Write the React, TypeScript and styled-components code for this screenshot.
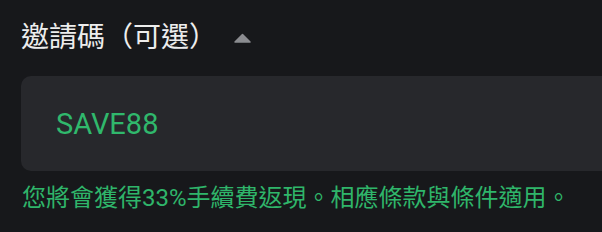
import React from "react";
import styled, { createGlobalStyle } from "styled-components";

const Global = createGlobalStyle`
  html, body { margin: 0; padding: 0; background: #17181b; }
  body { width: 602px; height: 232px; overflow: hidden; font-family: Roboto, "Noto Sans CJK TC", sans-serif; }
`;

const Page = styled.div`
  width: 602px;
  height: 232px;
  box-sizing: border-box;
  padding: 18px 0 0 21px;
  display: flex;
  flex-direction: column;
  overflow: hidden;
`;

const Header = styled.div`
  display: flex;
  align-items: center;
  gap: 17px;
  height: 40px;
`;

const Title = styled.span`
  color: #ededed;
  font-size: 28px;
  font-weight: 400;
  line-height: 40px;
`;

const Caret = styled.svg`
  width: 17px;
  height: 10px;
`;

const InputBox = styled.div`
  margin-top: 18px;
  width: 640px;
  height: 95px;
  box-sizing: border-box;
  background: #27282c;
  border-radius: 10px;
  display: flex;
  align-items: center;
  padding-left: 35px;
`;

const Code = styled.span`
  color: #30b86c;
  font-size: 29px;
  line-height: 40px;
`;

const Note = styled.p`
  margin: 11px 0 0 1px;
  color: #2fb56a;
  font-size: 24px;
  line-height: 32px;
  white-space: nowrap;
`;

export default function App() {
  return (
    <>
      <Global />
      <Page>
        <Header>
          <Title>邀請碼（可選）</Title>
          <Caret viewBox="0 0 17 10">
            <path d="M8.5 1.5 L16 9 L1 9 Z" fill="#8b8c90" strokeLinejoin="round" stroke="#8b8c90" strokeWidth="1.5" />
          </Caret>
        </Header>
        <InputBox>
          <Code>SAVE88</Code>
        </InputBox>
        <Note>您將會獲得33%手續費返現。相應條款與條件適用。</Note>
      </Page>
    </>
  );
}
